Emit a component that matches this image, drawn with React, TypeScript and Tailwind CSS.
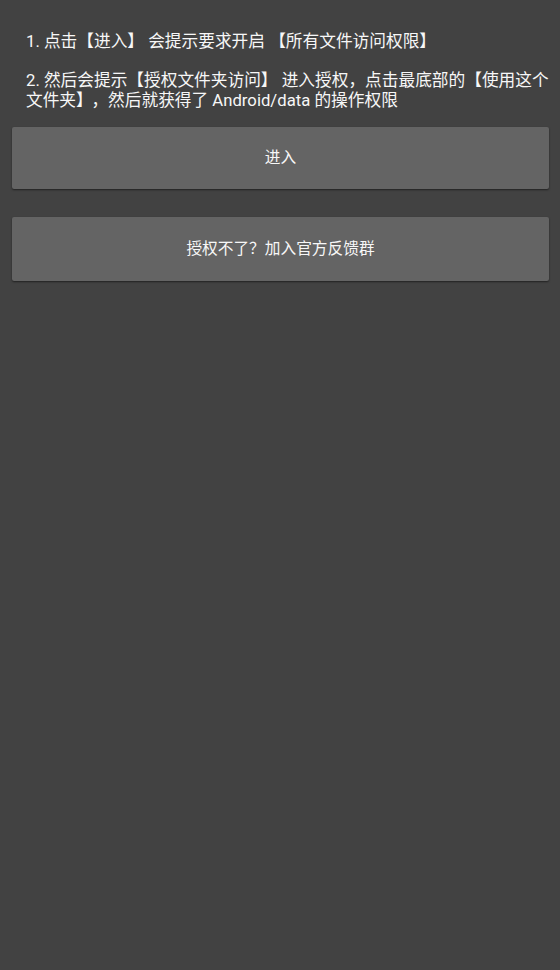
import React from "react";

export default function App() {
  return (
    <div
      className="w-[560px] h-[970px] bg-[#424242] text-[#f7f7f7] overflow-hidden"
      style={{ fontFamily: 'Roboto, "Noto Sans CJK SC", sans-serif' }}
    >
      <div className="pt-[32px] pl-[26px] pr-[8px] text-[16.7px] leading-[19.7px]">
        <div>1. 点击【进入】 会提示要求开启 【所有文件访问权限】</div>
        <div className="h-[19.7px]" />
        <div>
          2. 然后会提示【授权文件夹访问】 进入授权，点击最底部的【使用这个文件夹】<span className="ml-[7px]">，</span>然后就获得了 Android/data 的操作权限
        </div>
      </div>
      <div className="mt-[16px] pl-[12px] pr-[11px] flex flex-col gap-[28px]">
        <button className="h-[62px] w-full bg-[#646464] rounded-[2px] shadow-[0_1px_2px_rgba(0,0,0,0.5)] text-[15.7px] text-[#f7f7f7]">
          进入
        </button>
        <button className="h-[64px] w-full bg-[#646464] rounded-[2px] shadow-[0_1px_2px_rgba(0,0,0,0.5)] text-[15.7px] text-[#f7f7f7]">
          授权不了？加入官方反馈群
        </button>
      </div>
    </div>
  );
}
